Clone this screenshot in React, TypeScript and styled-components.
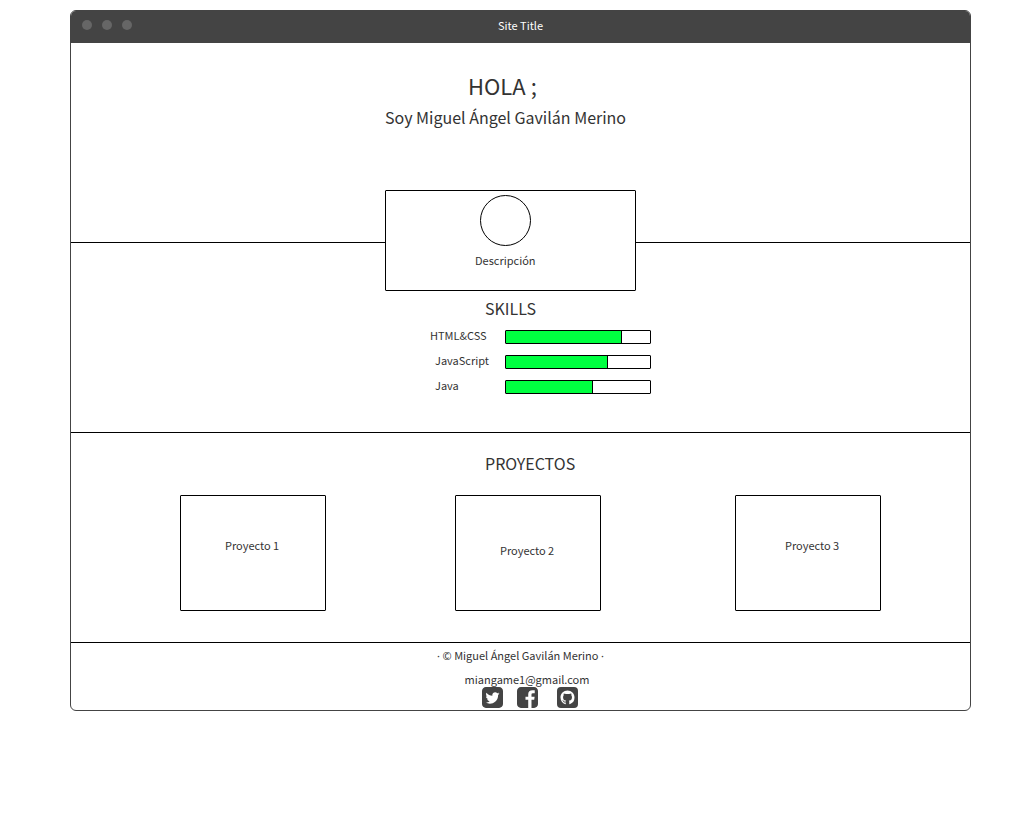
import React from "react";
import styled, { createGlobalStyle } from "styled-components";

const GlobalStyle = createGlobalStyle`
  *, *::before, *::after { box-sizing: border-box; }
  body {
    margin: 0;
    background: #fff;
    color: #333;
    font-family: "Noto Sans CJK SC", "Noto Sans", sans-serif;
    font-size: 11px;
    line-height: 24px;
  }
  h1, h2, p { margin: 0; font-weight: 400; }
`;

const Window = styled.div`
  margin: 10px 50px 10px 70px;
  border: 1px solid #444;
  border-radius: 6px;
  overflow: hidden;
`;

const TitleBar = styled.header`
  display: grid;
  grid-template-columns: 1fr auto 1fr;
  align-items: center;
  height: 32px;
  padding: 0 11px;
  background: #444;
  color: #fff;
`;

const Dots = styled.div`
  display: flex;
  gap: 10px;
  padding-bottom: 4px;
`;

const Dot = styled.span`
  width: 10px;
  height: 10px;
  border-radius: 50%;
  background: #666;
`;

const SiteTitle = styled.span`
  padding-bottom: 4px;
`;

const Section = styled.section<{ $top: number; $bottom: number }>`
  padding: ${(p) => p.$top}px 0 ${(p) => p.$bottom}px;
  border-bottom: 1px solid #000;
`;

const Column = styled.div`
  width: 271px;
  margin: 0 auto;
`;

const Heading = styled.h2<{ $indent?: number }>`
  padding-left: ${(p) => p.$indent ?? 0}px;
  font-size: 16px;
  line-height: 30px;
`;

const Greeting = styled.h1`
  margin-bottom: 2px;
  padding-left: 83px;
  font-size: 22px;
  line-height: 30px;
`;

const ProfileCard = styled.div`
  position: relative;
  width: 251px;
  height: 101px;
  margin: 58px 0 -49px;
  padding: 4px 89px 0;
  border: 1px solid #000;
  border-radius: 1px;
  background: #fff;
`;

const Avatar = styled.div`
  width: 51px;
  height: 51px;
  margin: 0 0 2px 5px;
  border: 1px solid #000;
  border-radius: 50%;
`;

const SkillRow = styled.div`
  display: grid;
  grid-template-columns: 75px 146px;
  align-items: center;
  height: 25px;
  padding-left: 45px;
`;

const SkillName = styled.span<{ $indent: number }>`
  padding: 0 0 3px ${(p) => p.$indent}px;
`;

const Meter = styled.div`
  height: 14px;
  border: 1px solid #000;
  border-radius: 1px;
`;

const MeterFill = styled.div`
  box-sizing: content-box;
  height: 100%;
  border-right: 1px solid #000;
  background: #00ff40;
`;

const Projects = styled.div`
  display: grid;
  grid-template-columns: 275fr 280fr 146px;
  padding: 17px 89px 0 109px;
`;

const ProjectCard = styled.article<{ $indent: number; $top: number }>`
  width: 146px;
  height: 116px;
  padding: ${(p) => p.$top}px 0 0 ${(p) => p.$indent}px;
  border: 1px solid #000;
  border-radius: 1px;
`;

const Footer = styled.footer`
  display: flex;
  flex-direction: column;
  align-items: center;
  padding-bottom: 2px;
`;

const Separator = styled.span`
  font-family: "Noto Sans", sans-serif;
  line-height: 1;
`;

const Mail = styled.a`
  margin-top: 3px;
  padding-left: 13px;
  line-height: 19px;
  color: inherit;
  text-decoration: none;
`;

const Social = styled.nav`
  display: flex;
  gap: 14px;
  padding-left: 18px;
  margin-top: -2px;
`;

const SocialLink = styled.a<{ $space?: number }>`
  display: block;
  height: 21px;
  margin-left: ${(p) => p.$space ?? 0}px;
  color: #444;

  svg { display: block; width: 21px; height: 21px; }
`;

const skills = [
  { name: "HTML&CSS", value: 80, indent: 0 },
  { name: "JavaScript", value: 70, indent: 5 },
  { name: "Java", value: 60, indent: 5 },
];

const projects = [
  { name: "Proyecto 1", indent: 44, top: 37 },
  { name: "Proyecto 2", indent: 44, top: 42 },
  { name: "Proyecto 3", indent: 49, top: 37 },
];

const TwitterIcon = () => (
  <svg viewBox="128 128 1536 1536" fill="currentColor" aria-hidden="true">
    <path d="M1408 610q-56 25-121 34 68-40 93-117-65 38-134 51-61-66-153-66-87 0-148.5 61.5t-61.5 148.5q0 29 5 48-129-7-242-65t-192-155q-29 50-29 106 0 114 91 175-47-1-100-26v2q0 75 50 133.5t123 72.5q-29 8-51 8-13 0-39-4 21 63 74.5 104t121.5 42q-116 90-261 90-26 0-50-3 148 94 322 94 112 0 210-35.5t168-95 120.5-137 75-162 24.5-168.5q0-18-1-27 63-45 105-109zm256-194v960q0 119-84.5 203.5t-203.5 84.5h-960q-119 0-203.5-84.5t-84.5-203.5v-960q0-119 84.5-203.5t203.5-84.5h960q119 0 203.5 84.5t84.5 203.5z" />
  </svg>
);

const FacebookIcon = () => (
  <svg viewBox="128 128 1536 1536" fill="currentColor" aria-hidden="true">
    <path d="M1376 128q119 0 203.5 84.5t84.5 203.5v960q0 119-84.5 203.5t-203.5 84.5h-188v-595h199l30-232h-229v-148q0-56 23.5-84t91.5-28l122-1v-207q-63-9-178-9-136 0-217.5 80t-81.5 226v171h-200v232h200v595h-532q-119 0-203.5-84.5t-84.5-203.5v-960q0-119 84.5-203.5t203.5-84.5h960z" />
  </svg>
);

const GithubIcon = () => (
  <svg viewBox="0 0 24 24" aria-hidden="true">
    <rect width="24" height="24" rx="4.5" fill="currentColor" />
    <path
      fill="#fff"
      transform="translate(4 4)"
      d="M8 0C3.58 0 0 3.58 0 8c0 3.54 2.29 6.53 5.47 7.59.4.07.55-.17.55-.38 0-.19-.01-.82-.01-1.49-2.01.37-2.53-.49-2.69-.94-.09-.23-.48-.94-.82-1.13-.28-.15-.68-.52-.01-.53.63-.01 1.08.58 1.23.82.72 1.21 1.87.87 2.33.66.07-.52.28-.87.51-1.07-1.78-.2-3.64-.89-3.64-3.95 0-.87.31-1.59.82-2.15-.08-.2-.36-1.02.08-2.12 0 0 .67-.21 2.2.82.64-.18 1.32-.27 2-.27.68 0 1.36.09 2 .27 1.53-1.04 2.2-.82 2.2-.82.44 1.1.16 1.92.08 2.12.51.56.82 1.27.82 2.15 0 3.07-1.87 3.75-3.65 3.95.29.25.54.73.54 1.48 0 1.07-.01 1.93-.01 2.2 0 .21.15.46.55.38A8.013 8.013 0 0016 8c0-4.42-3.58-8-8-8z"
    />
  </svg>
);

export default function App() {
  return (
    <>
      <GlobalStyle />
      <Window>
        <TitleBar>
          <Dots>
            <Dot />
            <Dot />
            <Dot />
          </Dots>
          <SiteTitle>Site Title</SiteTitle>
        </TitleBar>
        <main>
          <Section $top={27} $bottom={0}>
            <Column>
              <Greeting>HOLA ;</Greeting>
              <Heading>Soy Miguel Ángel Gavilán Merino</Heading>
              <ProfileCard>
                <Avatar />
                <p>Descripción</p>
              </ProfileCard>
            </Column>
          </Section>
          <Section $top={50} $bottom={34}>
            <Column>
              <Heading $indent={100}>SKILLS</Heading>
              {skills.map((s) => (
                <SkillRow key={s.name}>
                  <SkillName $indent={s.indent}>{s.name}</SkillName>
                  <Meter
                    role="meter"
                    aria-label={s.name}
                    aria-valuemin={0}
                    aria-valuemax={100}
                    aria-valuenow={s.value}
                  >
                    <MeterFill style={{ width: `${s.value}%` }} />
                  </Meter>
                </SkillRow>
              ))}
            </Column>
          </Section>
          <Section $top={15} $bottom={31}>
            <Column>
              <Heading $indent={100}>PROYECTOS</Heading>
            </Column>
            <Projects>
              {projects.map((p) => (
                <ProjectCard key={p.name} $indent={p.indent} $top={p.top}>
                  <p>{p.name}</p>
                </ProjectCard>
              ))}
            </Projects>
          </Section>
        </main>
        <Footer>
          <p>
            <Separator>·</Separator> © Miguel Ángel Gavilán Merino{" "}
            <Separator>·</Separator>
          </p>
          <Mail href="mailto:miangame1@gmail.com">miangame1@gmail.com</Mail>
          <Social>
            <SocialLink href="#twitter" aria-label="Twitter">
              <TwitterIcon />
            </SocialLink>
            <SocialLink href="#facebook" aria-label="Facebook">
              <FacebookIcon />
            </SocialLink>
            <SocialLink href="#github" aria-label="GitHub" $space={5}>
              <GithubIcon />
            </SocialLink>
          </Social>
        </Footer>
      </Window>
    </>
  );
}
